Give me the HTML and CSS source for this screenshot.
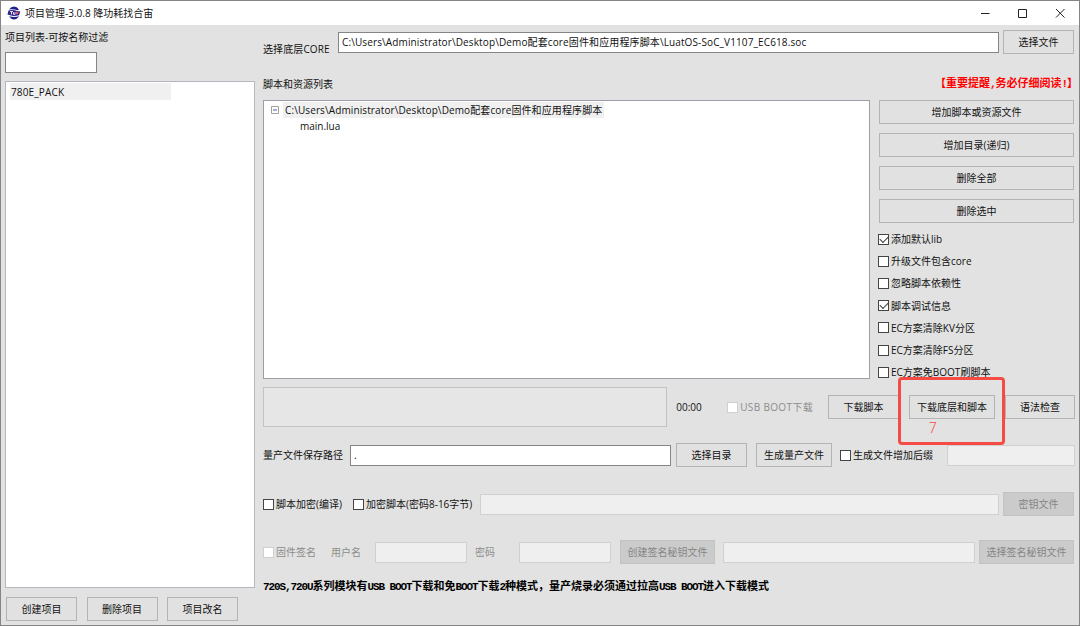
FILE: index.html
```html
<!DOCTYPE html>
<html lang="zh-CN">
  <head>
    <meta charset="utf-8">
    <title>项目管理-3.0.8 降功耗找合宙</title>
    <link rel="stylesheet" href="styles.css">
  </head>
  <body>
  <div id="window">
    <div id="title-bar">
      <svg class="logo" width="14" height="14" viewBox="0 0 14 14">
        <path d="M2 3.500Q4 .5 7 .5T12 3.500L10.500 4.200Q6 2.800 2 3.500Z" fill="#20208a"/>
        <path d="M1.500 4.500Q6 3.500 10 5L13.300 5.500 12 9.200Q7 10.500 3 9.300L.5 8.500Z" fill="#26268e"/>
        <path d="M2 10.300Q7 11.600 12.300 10.300 10 13.400 7 13.400T2 10.300Z" fill="#20208a"/>
        <path d="M3 5.600H6M4.500 5.600V8.500M6.500 6.200V8.300H8V6.200" stroke="#f0dce8" fill="none"/>
        <path d="M9 8.500V6.300H11.500M9 7.500H11" stroke="#ef6675" fill="none"/>
      </svg>
      <span class="title">项目管理-3.0.8 降功耗找合宙</span>
      <svg class="controls" width="90" height="12" viewBox="0 0 90 12">
        <path d="M2 6.500H10.500M39.500 2.500H47.500V10.500H39.500ZM77 2L85.500 10.500M85.500 2L77 10.500" fill="none" stroke="#222"/>
      </svg>
    </div>

    <div id="content">
      <div id="projects">
        <div class="caption">项目列表-可按名称过滤</div>
        <input type="text" class="filter">
        <div class="project-list">
          <div class="project">780E_PACK</div>
        </div>
        <div class="project-buttons">
          <button>创建项目</button>
          <button>删除项目</button>
          <button>项目改名</button>
        </div>
      </div>

      <div id="settings">
        <div class="row core">
          <span class="label">选择底层CORE</span>
          <input type="text" value="C:\Users\Administrator\Desktop\Demo配套core固件和应用程序脚本\LuatOS-SoC_V1107_EC618.soc">
          <button>选择文件</button>
        </div>
        <div class="row heading">
          <span>脚本和资源列表</span>
          <span class="warning">【重要提醒<i>,</i>务必仔细阅读<i>!</i>】</span>
        </div>
        <div class="scripts">
          <div class="tree">
            <div class="folder">
              <svg width="8" height="8" viewBox="0 0 8 8"><path d="M.5 .5H7.500V7.500H.5Z" fill="#fff" stroke="#a0a0a0"/><path d="M2 4H6" stroke="#4060a0"/></svg>
              <span>C:\Users\Administrator\Desktop\Demo配套core固件和应用程序脚本</span>
            </div>
            <div class="file">main.lua</div>
          </div>
          <div class="side">
            <button>增加脚本或资源文件</button>
            <button>增加目录(递归)</button>
            <button>删除全部</button>
            <button>删除选中</button>
            <div class="options">
              <label><input type="checkbox" checked>添加默认lib</label>
              <label><input type="checkbox">升级文件包含core</label>
              <label><input type="checkbox">忽略脚本依赖性</label>
              <label><input type="checkbox" checked>脚本调试信息</label>
              <label><input type="checkbox">EC方案清除KV分区</label>
              <label><input type="checkbox">EC方案清除FS分区</label>
              <label><input type="checkbox">EC方案免BOOT刷脚本</label>
            </div>
          </div>
        </div>
        <div class="row download">
          <div class="progress"></div>
          <span class="time">00:00</span>
          <label class="off usb"><input type="checkbox" disabled>USB BOOT下载</label>
          <button class="script">下载脚本</button>
          <div class="marked">
            <button>下载底层和脚本</button>
            <div class="mark">7</div>
          </div>
          <button class="check">语法检查</button>
        </div>
        <div class="row product">
          <span class="label">量产文件保存路径</span>
          <input type="text" class="path" value=".">
          <button class="dir">选择目录</button>
          <button class="make">生成量产文件</button>
          <label><input type="checkbox">生成文件增加后缀</label>
          <input type="text" class="suffix" disabled>
        </div>
        <div class="row encrypt">
          <label class="compile"><input type="checkbox">脚本加密(编译)</label>
          <label class="secret"><input type="checkbox">加密脚本(密码8-16字节)</label>
          <input type="text" disabled>
          <button disabled>密钥文件</button>
        </div>
        <div class="row sign">
          <label class="off"><input type="checkbox" disabled>固件签名</label>
          <span class="off user">用户名</span>
          <input type="text" class="short" disabled>
          <span class="off password">密码</span>
          <input type="text" class="short" disabled>
          <button class="create" disabled>创建签名秘钥文件</button>
          <input type="text" class="key" disabled>
          <button class="choose" disabled>选择签名秘钥文件</button>
        </div>
        <div class="note"><i>720S,720U</i>系列模块有<i>USB BOOT</i>下载和免<i>BOOT</i>下载<i>2</i>种模式，量产烧录必须通过拉高<i>USB BOOT</i>进入下载模式</div>
      </div>
    </div>
  </div>
  </body>
</html>
```
FILE: styles.css
```css
* {
  box-sizing: border-box;
}
body {
  margin: 0;
}
body, input, button {
  font-family: "Open Sans", "Noto Sans CJK SC", sans-serif;
  font-size: 10px;
  line-height: 14px;
  color: #111;
}
#window {
  width: 1080px;
  height: 626px;
  overflow: hidden;
  border: 1px solid #858585;
  background-color: #e2e2e2;
}
#title-bar {
  display: flex;
  align-items: center;
  height: 24px;
  padding: 0 10px 0 6px;
  background-color: #fff;
}
.title {
  margin-left: 4px;
}
.controls {
  margin-left: auto;
}
#content {
  display: flex;
  gap: 8px;
  padding: 0 4px;
}
#projects {
  width: 250px;
  padding-top: 5px;
}
.caption {
  height: 22px;
}
input[type='text'] {
  display: block;
  height: 21px;
  padding: 0 3px 1px;
  border: 1px solid #858585;
  border-radius: 0;
  background-color: #fff;
}
input[type='text']:disabled {
  border-color: #d0d0d0;
  background-color: #efefef;
}
.filter {
  width: 92px;
}
.project-list {
  height: 507px;
  margin-top: 8px;
  padding: 1px 4px;
  border: 1px solid #b4b7be;
  background-color: #fff;
}
.project {
  width: 161px;
  height: 17px;
  padding: 2px 1px;
  background-color: #f0f0f0;
  letter-spacing: .15px;
}
.project-buttons {
  display: flex;
  gap: 9.5px;
  padding: 9px 0 0 1px;
}
button {
  width: 71px;
  height: 24px;
  padding: 0;
  border: 1px solid #b4b4b4;
  background-color: #e1e1e1;
  white-space: nowrap;
  flex-shrink: 0;
}
button:disabled {
  border-color: #c2c2c2;
  background-color: #cbcbcb;
  color: #858585;
}
#settings {
  width: 812px;
}
.row {
  display: flex;
  align-items: center;
  white-space: nowrap;
}
.core {
  height: 34px;
}
.core .label {
  width: 75px;
  padding-top: 14px;
  letter-spacing: .1px;
}
.core input {
  width: 661px;
  margin-right: 4px;
  padding-bottom: 2px;
  letter-spacing: .12px;
}
.core button {
  width: 71px;
}
.heading {
  justify-content: space-between;
  height: 41px;
  padding-top: 9px;
}
.warning, .note {
  font-family: "Noto Sans CJK SC", sans-serif;
  font-size: 11px;
  font-weight: bold;
}
.warning i, .note i {
  font-family: "Liberation Mono", monospace;
  font-style: normal;
  letter-spacing: -1.1px;
}
.warning {
  margin-right: -3px;
  padding-bottom: 3px;
  color: #f00;
}
.scripts {
  display: flex;
  gap: 9px;
  height: 279px;
}
.tree {
  width: 607px;
  height: 279px;
  padding: 1px 7px;
  border: 1px solid #9ba0a8;
  background-color: #fff;
}
.folder {
  display: flex;
  align-items: center;
  height: 16px;
}
.folder span {
  margin-left: 4px;
  padding: 1px 2px;
  background-color: #f0f0f0;
  letter-spacing: .11px;
}
.file {
  padding: 1px 29px;
}
.side {
  width: 195px;
}
.side button {
  display: block;
  width: 195px;
  margin: 1px 0 9px;
}
.side button:first-child {
  margin-top: 0;
}
.options {
  margin-top: -4px;
}
label {
  display: flex;
  align-items: center;
}
.options label {
  height: 22.2px;
  margin-left: -1px;
}
input[type='checkbox'] {
  appearance: none;
  flex: none;
  width: 11px;
  height: 11px;
  margin: 0 2px 0 0;
  border: 1px solid #444;
  background-color: #fff;
}
input[type='checkbox']:checked::before {
  content: "";
  display: block;
  width: 7px;
  height: 4px;
  margin: 1px;
  border: solid #333;
  border-width: 0 0 1px 1px;
  transform: rotate(-45deg);
}
input[type='checkbox']:disabled {
  border-color: #d0d0d0;
}
.off {
  color: #8c8c8c;
}
.download {
  height: 40px;
  margin-top: 8px;
}
.progress {
  width: 405px;
  height: 40px;
  border: 1px solid #c2c2c2;
  background-color: #e6e6e6;
}
.time {
  width: 51px;
  margin-left: 8px;
  padding-left: 1px;
}
.usb {
  width: 101px;
  padding-left: 1px;
  letter-spacing: .35px;
}
.marked {
  position: relative;
  margin: 0 10px;
}
.marked button {
  width: 86px;
}
.mark {
  position: absolute;
  left: -11px;
  top: -18px;
  width: 107px;
  height: 68px;
  padding: 41px 0 0 28px;
  border: 3px solid #f64b45;
  border-radius: 4px;
  font-family: Roboto, sans-serif;
  font-size: 14px;
  font-weight: 300;
  color: #f64b45;
  pointer-events: none;
}
.script {
  margin-left: 1px;
}
.check {
  width: 70px;
}
.product {
  height: 24px;
  margin-top: 16px;
}
.product .label {
  width: 87px;
}
.path {
  width: 321px;
}
.dir {
  margin: 0 9px 0 5px;
}
.make {
  width: 76px;
  margin-right: 8px;
}
.suffix {
  width: 128px;
  margin-left: auto;
}
.encrypt {
  height: 24px;
  margin-top: 25px;
}
.compile {
  width: 90px;
}
.secret {
  width: 127px;
}
.encrypt input[type='text'] {
  width: 519px;
  margin-right: 4px;
}
.encrypt button {
  width: 71px;
}
.sign {
  height: 24px;
  margin-top: 24px;
}
.sign label {
  width: 68px;
}
.user {
  width: 44px;
}
.short {
  width: 92px;
}
.password {
  width: 44px;
  margin-left: 8px;
}
.create {
  width: 95px;
  margin: 0 8px 0 9px;
}
.key {
  width: 252px;
}
.choose {
  width: 95px;
  margin-left: 4px;
}
.note {
  margin-top: 14px;
  white-space: nowrap;
  color: #000;
}
```
